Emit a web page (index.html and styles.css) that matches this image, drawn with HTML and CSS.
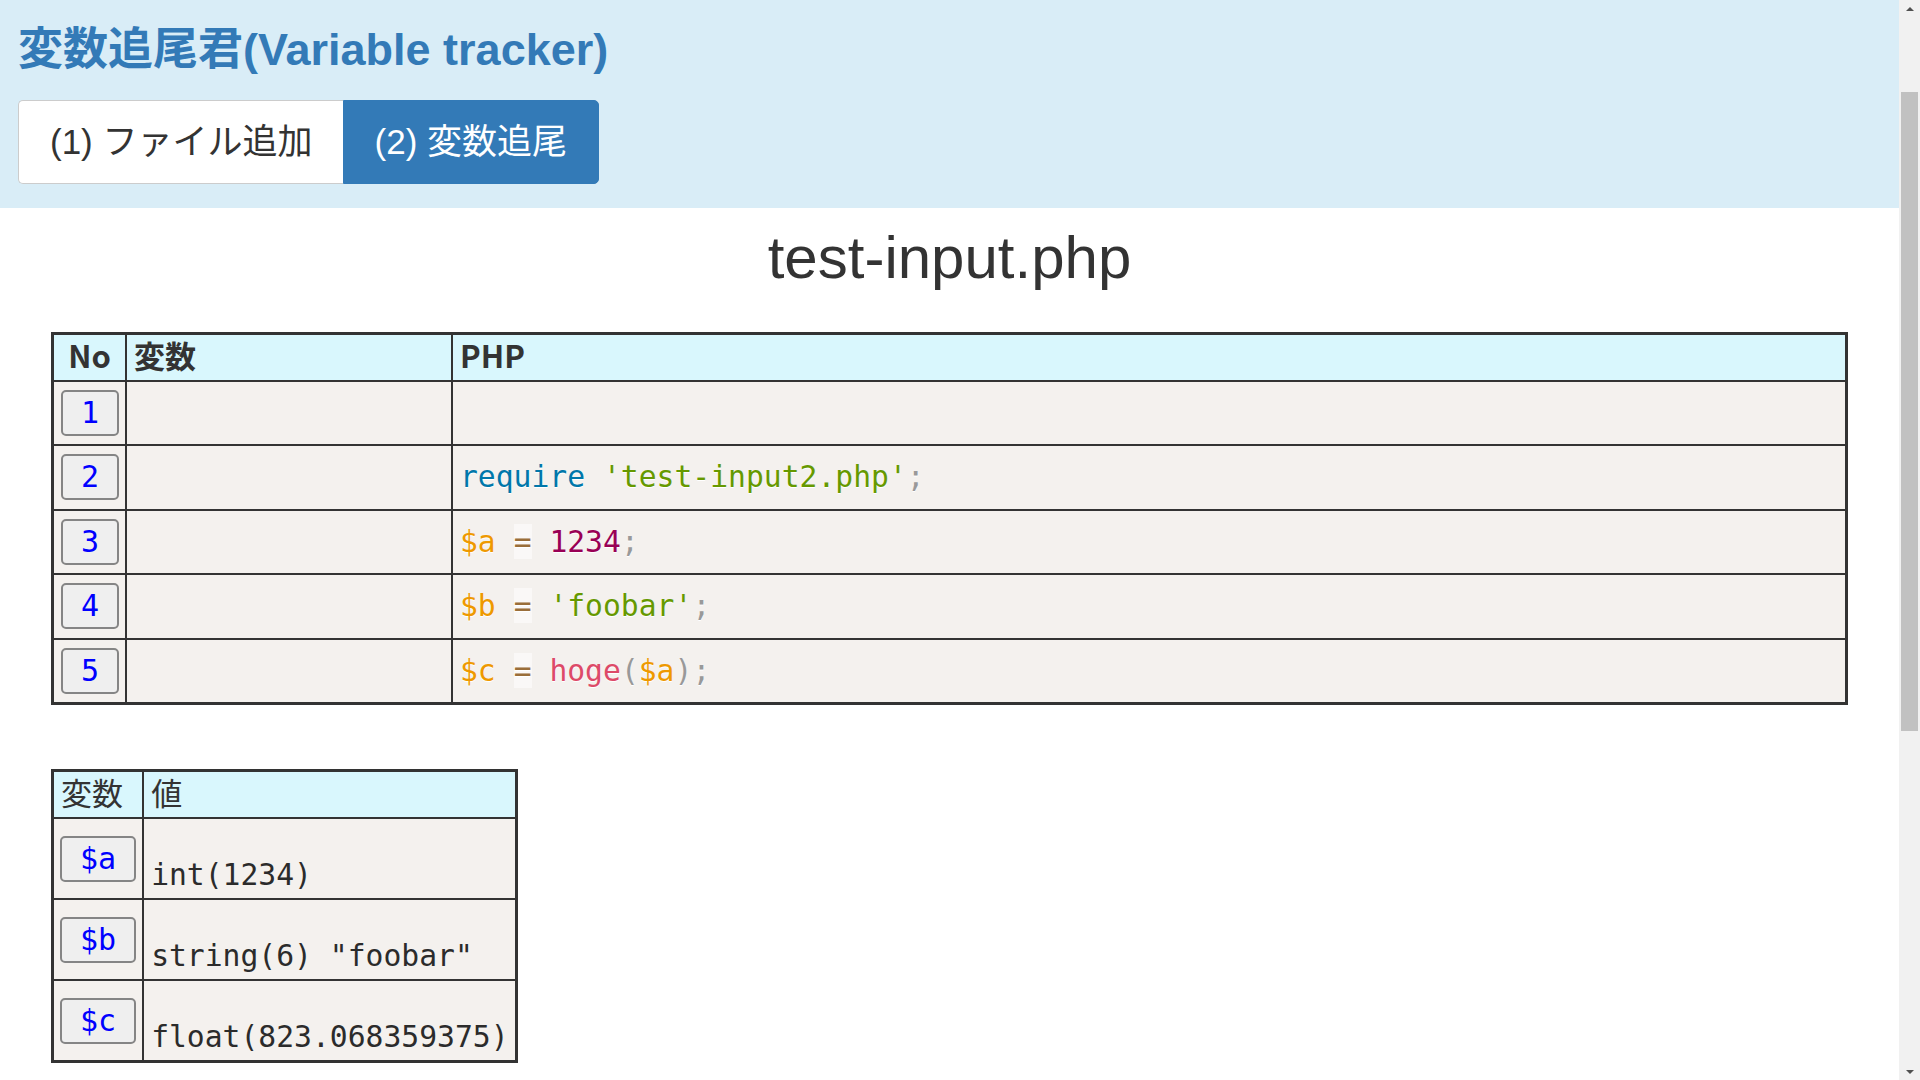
FILE: index.html
```html
<!DOCTYPE html>
<html lang="ja">
<head>
<meta charset="utf-8">
<title>変数追尾君(Variable tracker)</title>
<link rel="stylesheet" href="styles.css">
</head>
<body>
<div class="page">
  <header class="app-header">
    <h1 class="app-title">変数追尾君(Variable tracker)</h1>
    <nav class="tabs">
      <a class="tab tab-first">(1) ファイル追加</a>
      <a class="tab tab-active">(2) 変数追尾</a>
    </nav>
  </header>
  <main class="content">
    <h2 class="filename">test-input.php</h2>
    <table class="code-table">
      <thead>
        <tr>
          <th class="col-no">No</th>
          <th class="col-var">変数</th>
          <th class="col-php">PHP</th>
        </tr>
      </thead>
      <tbody>
        <tr>
          <td><button class="line-btn">1</button></td>
          <td></td>
          <td class="code"></td>
        </tr>
        <tr>
          <td><button class="line-btn">2</button></td>
          <td></td>
          <td class="code"><span class="t-keyword">require</span> <span class="t-string">'test-input2.php'</span><span class="t-punct">;</span></td>
        </tr>
        <tr>
          <td><button class="line-btn">3</button></td>
          <td></td>
          <td class="code"><span class="t-var">$a</span> <span class="t-op">=</span> <span class="t-num">1234</span><span class="t-punct">;</span></td>
        </tr>
        <tr>
          <td><button class="line-btn">4</button></td>
          <td></td>
          <td class="code"><span class="t-var">$b</span> <span class="t-op">=</span> <span class="t-string">'foobar'</span><span class="t-punct">;</span></td>
        </tr>
        <tr>
          <td><button class="line-btn">5</button></td>
          <td></td>
          <td class="code"><span class="t-var">$c</span> <span class="t-op">=</span> <span class="t-func">hoge</span><span class="t-punct">(</span><span class="t-var">$a</span><span class="t-punct">)</span><span class="t-punct">;</span></td>
        </tr>
      </tbody>
    </table>

    <table class="var-table">
      <thead>
        <tr>
          <th>変数</th>
          <th>値</th>
        </tr>
      </thead>
      <tbody>
        <tr>
          <td class="var-cell"><button class="line-btn var-btn">$a</button></td>
          <td class="value">int(1234)</td>
        </tr>
        <tr>
          <td class="var-cell"><button class="line-btn var-btn">$b</button></td>
          <td class="value">string(6) "foobar"</td>
        </tr>
        <tr>
          <td class="var-cell"><button class="line-btn var-btn">$c</button></td>
          <td class="value">float(823.068359375)</td>
        </tr>
      </tbody>
    </table>
  </main>
</div>
<div class="scrollbar">
  <div class="sb-arrow sb-up"></div>
  <div class="sb-track"><div class="sb-thumb"></div></div>
  <div class="sb-arrow sb-down"></div>
</div>
</body>
</html>
```
FILE: styles.css
```css
html, body {
  margin: 0;
  height: 100%;
  overflow: hidden;
}

body {
  display: flex;
  background: #fff;
  color: #333;
  font-family: "Liberation Sans", "Noto Sans CJK JP", sans-serif;
}

.page {
  flex: 1;
  min-width: 0;
}

/* ---------- header ---------- */
.app-header {
  background: #d9edf7;
  padding: 24.6px 18px 24px;
}

.app-title {
  margin: 0 0 25.5px;
  font-size: 45px;
  line-height: 49.5px;
  font-weight: 700;
  color: #337ab7;
}

.tabs {
  display: flex;
}

.tab {
  box-sizing: border-box;
  height: 84px;
  display: flex;
  align-items: center;
  padding: 0 31px;
  font-size: 35px;
  line-height: 1;
  border: 1px solid #ccc;
  cursor: pointer;
}

.tab-first {
  background: #fff;
  color: #333;
  border-right: 0;
  padding-right: 30px;
  border-radius: 5px 0 0 5px;
}

.tab-active {
  background: #337ab7;
  border-color: #337ab7;
  color: #fff;
  border-radius: 0 5px 5px 0;
}

/* ---------- content ---------- */
.content {
  padding: 0 51px;
}

.filename {
  margin: 17px 0 41px;
  text-align: center;
  font-size: 60px;
  line-height: 66px;
  font-weight: 400;
  color: #333;
}

.code-table,
.var-table {
  border-collapse: separate;
  border-spacing: 0;
  border: 3px solid #333;
}

.code-table {
  width: 100%;
  table-layout: fixed;
}

.code-table th,
.code-table td,
.var-table th,
.var-table td {
  box-sizing: border-box;
  border-right: 2px solid #333;
  border-bottom: 2px solid #333;
  padding: 0 7px;
  vertical-align: middle;
  text-align: left;
}

.code-table th:last-child,
.code-table td:last-child,
.var-table th:last-child,
.var-table td:last-child {
  border-right: 0;
}

.code-table tbody tr:last-child td,
.var-table tbody tr:last-child td {
  border-bottom: 0;
}

.code-table th,
.var-table th {
  background: #d9f7fd;
  font-family: "Noto Sans CJK JP", sans-serif;
  font-size: 31px;
  line-height: 36px;
  color: #333;
  padding-bottom: 5px;
}

.code-table th {
  font-weight: 700;
}

.var-table th {
  font-weight: 400;
}

.code-table td,
.var-table td {
  background: #f4f1ee;
}

.code-table thead tr,
.var-table thead tr {
  height: 47px;
}

.code-table tbody tr {
  height: 64.5px;
}

.code-table tbody tr:last-child {
  height: 62.5px;
}

.col-no {
  width: 73px;
  text-align: center !important;
}

.col-var {
  width: 326px;
}

/* ---------- buttons ---------- */
.line-btn {
  box-sizing: border-box;
  height: 46px;
  padding: 0 18px;
  margin: 0;
  display: block;
  background: #efefef;
  border: 2px solid #858585;
  border-radius: 5px;
  color: #0000ff;
  font-family: "DejaVu Sans Mono", monospace;
  font-size: 30px;
  line-height: 1;
  cursor: pointer;
}

.var-btn {
  padding: 0 18px;
}

.var-table td.var-cell {
  padding: 0 6px;
}

/* ---------- code ---------- */
.code {
  font-family: "DejaVu Sans Mono", monospace;
  font-size: 29.7px;
  line-height: 1.5;
  white-space: pre;
  color: #000;
  text-shadow: 0 1px #fff;
}

.t-keyword { color: #07a; }
.t-string { color: #690; }
.t-punct { color: #999; }
.t-var { color: #e90; }
.t-num { color: #905; }
.t-func { color: #dd4a68; }
.t-op {
  color: #9a6e3a;
  background: rgba(255, 255, 255, 0.5);
}

/* ---------- variable table ---------- */
.var-table {
  margin-top: 64px;
}

.var-table tbody tr {
  height: 81px;
}

.var-table tbody tr:last-child {
  height: 79px;
}

.var-table td.value {
  vertical-align: bottom;
  padding: 0 6px 5px 7px;
  font-family: "DejaVu Sans Mono", monospace;
  font-size: 29.7px;
  line-height: 36px;
  white-space: pre;
  color: #2b2b2b;
}

/* ---------- scrollbar ---------- */
.scrollbar {
  flex: none;
  width: 21px;
  background: #f1f1f1;
  display: flex;
  flex-direction: column;
}

.sb-arrow {
  height: 17px;
  display: flex;
  align-items: center;
  justify-content: center;
}

.sb-up::before,
.sb-down::before {
  content: "";
  width: 0;
  height: 0;
  border-left: 4px solid transparent;
  border-right: 4px solid transparent;
}

.sb-up::before {
  border-bottom: 4px solid #505050;
}

.sb-down::before {
  border-top: 4px solid #505050;
}

.sb-track {
  flex: 1;
  padding: 0 2px;
}

.sb-thumb {
  margin-top: 75px;
  height: 639px;
  background: #c1c1c1;
}
```
